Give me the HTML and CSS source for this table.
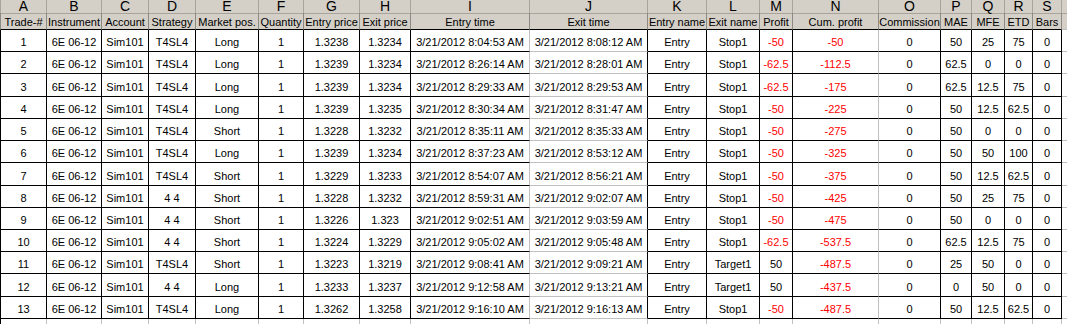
FILE: index.html
```html
<!DOCTYPE html>
<html lang="en">
<head>
  <meta charset="UTF-8">
  <title>Trades export</title>
  <link rel="stylesheet" href="styles.css">
</head>
<body>
  <div class="sheet">
    <div class="row letters">
      <span>A</span><span>B</span><span>C</span><span>D</span><span>E</span><span>F</span><span>G</span><span>H</span><span>I</span><span>J</span><span>K</span><span>L</span><span>M</span><span>N</span><span>O</span><span>P</span><span>Q</span><span>R</span><span>S</span><span></span>
    </div>
    <div class="row titles">
      <span>Trade-#</span><span>Instrument</span><span>Account</span><span>Strategy</span><span>Market pos.</span><span>Quantity</span><span>Entry price</span><span>Exit price</span><span>Entry time</span><span>Exit time</span><span>Entry name</span><span>Exit name</span><span>Profit</span><span>Cum. profit</span><span>Commission</span><span>MAE</span><span>MFE</span><span>ETD</span><span>Bars</span><span></span>
    </div>

    <div class="row"><span>1</span><span>6E 06-12</span><span>Sim101</span><span>T4SL4</span><span>Long</span><span>1</span><span>1.3238</span><span>1.3234</span><span>3/21/2012 8:04:53 AM</span><span>3/21/2012 8:08:12 AM</span><span>Entry</span><span>Stop1</span><span class="neg">-50</span><span class="neg">-50</span><span>0</span><span>50</span><span>25</span><span>75</span><span>0</span><span></span></div>
    <div class="row"><span>2</span><span>6E 06-12</span><span>Sim101</span><span>T4SL4</span><span>Long</span><span>1</span><span>1.3239</span><span>1.3234</span><span>3/21/2012 8:26:14 AM</span><span>3/21/2012 8:28:01 AM</span><span>Entry</span><span>Stop1</span><span class="neg">-62.5</span><span class="neg">-112.5</span><span>0</span><span>62.5</span><span>0</span><span>0</span><span>0</span><span></span></div>
    <div class="row"><span>3</span><span>6E 06-12</span><span>Sim101</span><span>T4SL4</span><span>Long</span><span>1</span><span>1.3239</span><span>1.3234</span><span>3/21/2012 8:29:33 AM</span><span>3/21/2012 8:29:53 AM</span><span>Entry</span><span>Stop1</span><span class="neg">-62.5</span><span class="neg">-175</span><span>0</span><span>62.5</span><span>12.5</span><span>75</span><span>0</span><span></span></div>
    <div class="row"><span>4</span><span>6E 06-12</span><span>Sim101</span><span>T4SL4</span><span>Long</span><span>1</span><span>1.3239</span><span>1.3235</span><span>3/21/2012 8:30:34 AM</span><span>3/21/2012 8:31:47 AM</span><span>Entry</span><span>Stop1</span><span class="neg">-50</span><span class="neg">-225</span><span>0</span><span>50</span><span>12.5</span><span>62.5</span><span>0</span><span></span></div>
    <div class="row"><span>5</span><span>6E 06-12</span><span>Sim101</span><span>T4SL4</span><span>Short</span><span>1</span><span>1.3228</span><span>1.3232</span><span>3/21/2012 8:35:11 AM</span><span>3/21/2012 8:35:33 AM</span><span>Entry</span><span>Stop1</span><span class="neg">-50</span><span class="neg">-275</span><span>0</span><span>50</span><span>0</span><span>0</span><span>0</span><span></span></div>
    <div class="row"><span>6</span><span>6E 06-12</span><span>Sim101</span><span>T4SL4</span><span>Long</span><span>1</span><span>1.3239</span><span>1.3234</span><span>3/21/2012 8:37:23 AM</span><span>3/21/2012 8:53:12 AM</span><span>Entry</span><span>Stop1</span><span class="neg">-50</span><span class="neg">-325</span><span>0</span><span>50</span><span>50</span><span>100</span><span>0</span><span></span></div>
    <div class="row"><span>7</span><span>6E 06-12</span><span>Sim101</span><span>T4SL4</span><span>Short</span><span>1</span><span>1.3229</span><span>1.3233</span><span>3/21/2012 8:54:07 AM</span><span>3/21/2012 8:56:21 AM</span><span>Entry</span><span>Stop1</span><span class="neg">-50</span><span class="neg">-375</span><span>0</span><span>50</span><span>12.5</span><span>62.5</span><span>0</span><span></span></div>
    <div class="row"><span>8</span><span>6E 06-12</span><span>Sim101</span><span>4 4</span><span>Short</span><span>1</span><span>1.3228</span><span>1.3232</span><span>3/21/2012 8:59:31 AM</span><span>3/21/2012 9:02:07 AM</span><span>Entry</span><span>Stop1</span><span class="neg">-50</span><span class="neg">-425</span><span>0</span><span>50</span><span>25</span><span>75</span><span>0</span><span></span></div>
    <div class="row"><span>9</span><span>6E 06-12</span><span>Sim101</span><span>4 4</span><span>Short</span><span>1</span><span>1.3226</span><span>1.323</span><span>3/21/2012 9:02:51 AM</span><span>3/21/2012 9:03:59 AM</span><span>Entry</span><span>Stop1</span><span class="neg">-50</span><span class="neg">-475</span><span>0</span><span>50</span><span>0</span><span>0</span><span>0</span><span></span></div>
    <div class="row"><span>10</span><span>6E 06-12</span><span>Sim101</span><span>4 4</span><span>Short</span><span>1</span><span>1.3224</span><span>1.3229</span><span>3/21/2012 9:05:02 AM</span><span>3/21/2012 9:05:48 AM</span><span>Entry</span><span>Stop1</span><span class="neg">-62.5</span><span class="neg">-537.5</span><span>0</span><span>62.5</span><span>12.5</span><span>75</span><span>0</span><span></span></div>
    <div class="row"><span>11</span><span>6E 06-12</span><span>Sim101</span><span>T4SL4</span><span>Short</span><span>1</span><span>1.3223</span><span>1.3219</span><span>3/21/2012 9:08:41 AM</span><span>3/21/2012 9:09:21 AM</span><span>Entry</span><span>Target1</span><span>50</span><span class="neg">-487.5</span><span>0</span><span>25</span><span>50</span><span>0</span><span>0</span><span></span></div>
    <div class="row"><span>12</span><span>6E 06-12</span><span>Sim101</span><span>4 4</span><span>Long</span><span>1</span><span>1.3233</span><span>1.3237</span><span>3/21/2012 9:12:58 AM</span><span>3/21/2012 9:13:21 AM</span><span>Entry</span><span>Target1</span><span>50</span><span class="neg">-437.5</span><span>0</span><span>0</span><span>50</span><span>0</span><span>0</span><span></span></div>
    <div class="row"><span>13</span><span>6E 06-12</span><span>Sim101</span><span>T4SL4</span><span>Long</span><span>1</span><span>1.3262</span><span>1.3258</span><span>3/21/2012 9:16:10 AM</span><span>3/21/2012 9:16:13 AM</span><span>Entry</span><span>Stop1</span><span class="neg">-50</span><span class="neg">-487.5</span><span>0</span><span>50</span><span>12.5</span><span>62.5</span><span>0</span><span></span></div>

    <div class="row blank">
      <span></span><span></span><span></span><span></span><span></span><span></span><span></span><span></span><span></span><span></span><span></span><span></span><span></span><span></span><span></span><span></span><span></span><span></span><span></span><span></span>
    </div>
  </div>
</body>
</html>
```

FILE: styles.css
```css
* { box-sizing: border-box; }
html, body { margin: 0; padding: 0; background: #fff; overflow: hidden; }
.sheet { width: 1067px; font-family: "Liberation Sans", Arial, sans-serif; font-size: 11px; color: #000; }

/* every row shares the same column tracks: A..S plus the cut-off T */
.row { display: grid; grid-template-columns: 47px 55px 47px 47px 63px 45px 56px 51px 119px 118px 59px 53px 33px 86px 62px 31px 33px 28px 29px 5px; height: 22.23px; }
.row > span { display: flex; align-items: flex-end; justify-content: center; padding-bottom: 2px; line-height: 13px; white-space: nowrap; overflow: hidden; border-right: 1px solid #000; border-bottom: 1px solid #000; }
.row > span:first-child { border-left: 1px solid #000; }
.row > span:nth-child(9), .row > span:nth-child(14) { border-right-color: #c0c0c0; }
.row > span:nth-child(10) { border-bottom-color: #c0c0c0; }
.row > span:last-child { border-right: none; border-bottom-color: #c0c0c0; }
.neg { color: #f00; }

.letters { height: 13px; background: #d4d0c8; font-size: 14px; }
.letters > span { align-items: flex-start; padding-bottom: 0; line-height: 13px; overflow: visible; border-right-color: #a8a49c; border-bottom-color: #a8a49c; }
.letters > span:first-child { border-left-color: #a8a49c; }
.letters > span:nth-child(9), .letters > span:nth-child(14) { border-right-color: #a8a49c; }
.letters > span:nth-child(10), .letters > span:last-child { border-bottom-color: #a8a49c; }

.titles { height: 17px; background: #d4d0c8; }
.titles > span { padding-bottom: 1px; line-height: 12px; border-right-color: #8c8a85; }
.titles > span:first-child { border-left-color: #8c8a85; }
.titles > span:nth-child(9), .titles > span:nth-child(14) { border-right-color: #8c8a85; }
.titles > span:nth-child(10) { border-bottom-color: #000; }

.blank { height: 5px; }
.blank > span { border-right-color: #c0c0c0; border-bottom: none; }
.blank > span:first-child { border-left-color: #000; }
```
